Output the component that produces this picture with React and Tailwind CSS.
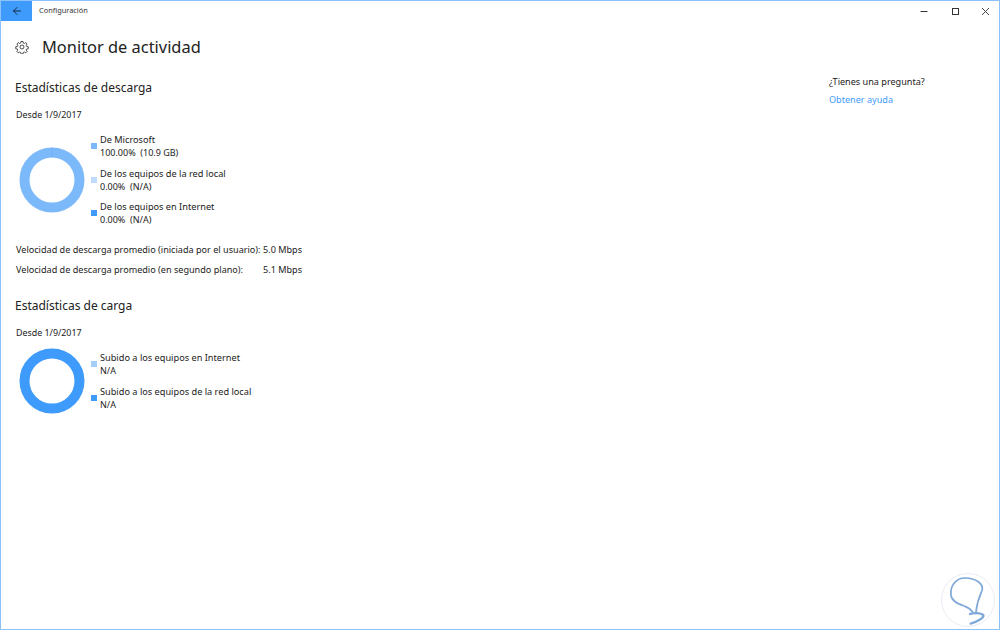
import { ArrowLeft } from 'lucide-react';

const font = { fontFamily: '"Noto Sans", sans-serif' };

function Swatch({ className }) {
  return <span className={`w-[6px] h-[6px] shrink-0 ${className}`} />;
}

function LegendItem({ color, label, value }) {
  return (
    <div className="flex items-center gap-[3px]">
      <Swatch className={color} />
      <div className="text-[9.2px] leading-[13px] text-[#222]">
        <div>{label}</div>
        <div className="whitespace-pre text-[9px]">{value}</div>
      </div>
    </div>
  );
}

function Donut({ color, seam }) {
  return (
    <svg viewBox="0 0 66 66" className="w-[66px] h-[66px] shrink-0">
      <circle cx="33" cy="33" r="27.5" fill="none" stroke={color} strokeWidth="10" />
      {seam && <path d="M33 0.5v10" stroke={seam} strokeWidth="0.7" />}
    </svg>
  );
}

function WindowButtons() {
  return (
    <div className="flex items-center">
      <svg viewBox="0 0 30 20" className="w-[30px] h-[20px]">
        <path d="M11.5 10.5h7" stroke="#333" strokeWidth="1" />
      </svg>
      <svg viewBox="0 0 30 20" className="w-[30px] h-[20px]">
        <rect x="13.5" y="7.5" width="6" height="6" fill="none" stroke="#333" strokeWidth="1" />
      </svg>
      <svg viewBox="0 0 30 20" className="w-[30px] h-[20px]">
        <path d="M13 7l7 7M20 7l-7 7" stroke="#333" strokeWidth="0.9" />
      </svg>
    </div>
  );
}

export default function App() {
  return (
    <div style={font} className="relative w-[1000px] h-[630px] bg-white border border-[#8cc2f8] overflow-hidden flex flex-col text-[#222]">
      <header className="flex items-center h-[20px] shrink-0">
        <div className="w-[31px] h-[20px] bg-[#3f9bfb] flex items-center justify-center">
          <ArrowLeft size={12} strokeWidth={1.8} color="#123" />
        </div>
        <span className="ml-[7px] text-[7.4px] text-[#333]">Configuración</span>
        <div className="ml-auto">
          <WindowButtons />
        </div>
      </header>

      <div className="flex flex-1">
        <main className="w-[827px] pl-[14px]">
          <div className="flex items-center mt-[14px] h-[24px]">
            <svg viewBox="0 0 24 24" className="w-[14px] h-[14px]" fill="none" stroke="#333" strokeWidth="1.5">
              <circle cx="12" cy="12" r="3.4" />
              <path d="M10.3 2.5h3.4l.5 2.7 1.9.8 2.3-1.5 2.4 2.4-1.6 2.3.8 1.9 2.7.5v3.4l-2.7.5-.8 1.9 1.6 2.3-2.4 2.4-2.3-1.6-1.9.8-.5 2.7h-3.4l-.5-2.7-1.9-.8-2.3 1.6-2.4-2.4 1.6-2.3-.8-1.9-2.7-.5v-3.4l2.7-.5.8-1.9-1.6-2.3 2.4-2.4 2.3 1.5 1.9-.8z" />
            </svg>
            <h1 className="ml-[13px] text-[16.4px] text-[#222]">Monitor de actividad</h1>
          </div>

          <h2 className="mt-[20px] text-[12px] leading-[18px] text-[#222]">Estadísticas de descarga</h2>
          <p className="mt-[11px] ml-px text-[8.9px] leading-[14px]">Desde 1/9/2017</p>

          <div className="flex items-center mt-[11px] ml-[4px]">
            <Donut color="#7cb9fb" seam="#6aaef8" />
            <div className="ml-[6px] flex flex-col gap-[7.5px]">
              <LegendItem color="bg-[#7cb9fb]" label="De Microsoft" value="100.00%  (10.9 GB)" />
              <LegendItem color="bg-[#bedcfd]" label="De los equipos de la red local" value="0.00%  (N/A)" />
              <LegendItem color="bg-[#3f9bfb]" label="De los equipos en Internet" value="0.00%  (N/A)" />
            </div>
          </div>

          <div className="mt-[17px] ml-px text-[9.1px] flex flex-col gap-[7px]">
            <div className="flex leading-[13px]">
              <span className="w-[246px] whitespace-nowrap">Velocidad de descarga promedio (iniciada por el usuario):</span>
              <span className="w-[40px] text-right whitespace-nowrap">5.0 Mbps</span>
            </div>
            <div className="flex leading-[13px]">
              <span className="w-[246px] whitespace-nowrap">Velocidad de descarga promedio (en segundo plano):</span>
              <span className="w-[40px] text-right whitespace-nowrap">5.1 Mbps</span>
            </div>
          </div>

          <h2 className="mt-[21px] text-[12px] leading-[18px]">Estadísticas de carga</h2>
          <p className="mt-[11px] ml-px text-[8.9px] leading-[14px]">Desde 1/9/2017</p>

          <div className="flex items-center mt-[8px] ml-[4px]">
            <Donut color="#3f9bfb" />
            <div className="ml-[6px] flex flex-col gap-[8px]">
              <LegendItem color="bg-[#a6d0fc]" label="Subido a los equipos en Internet" value="N/A" />
              <LegendItem color="bg-[#3f9bfb]" label="Subido a los equipos de la red local" value="N/A" />
            </div>
          </div>
        </main>

        <aside className="flex-1 pt-[54px] pl-px text-[9.1px]">
          <p className="leading-[14px] text-[#222]">¿Tienes una pregunta?</p>
          <a className="block mt-[4px] leading-[14px] text-[#3f9bfb]">Obtener ayuda</a>
        </aside>
      </div>

      {/* watermark */}
      <div className="absolute right-[4px] bottom-[2px] w-[54px] h-[54px] rounded-full bg-white border border-[#e8edf4] flex items-center justify-center">
        <svg viewBox="66 66 156 156" className="w-[52px] h-[52px]" fill="none" stroke="#7fa8d8" strokeLinecap="round">
          <path d="M168 180 C170 160 175 140 185 118 C195 95 165 78 135 78 C105 78 90 105 93 130 C96 150 120 158 135 163 C145 166 152 172 158 180" strokeWidth="5" />
          <path d="M150 186 C160 182 182 182 190 189 C193 198 170 210 152 215" strokeWidth="7" />
        </svg>
      </div>
    </div>
  );
}
